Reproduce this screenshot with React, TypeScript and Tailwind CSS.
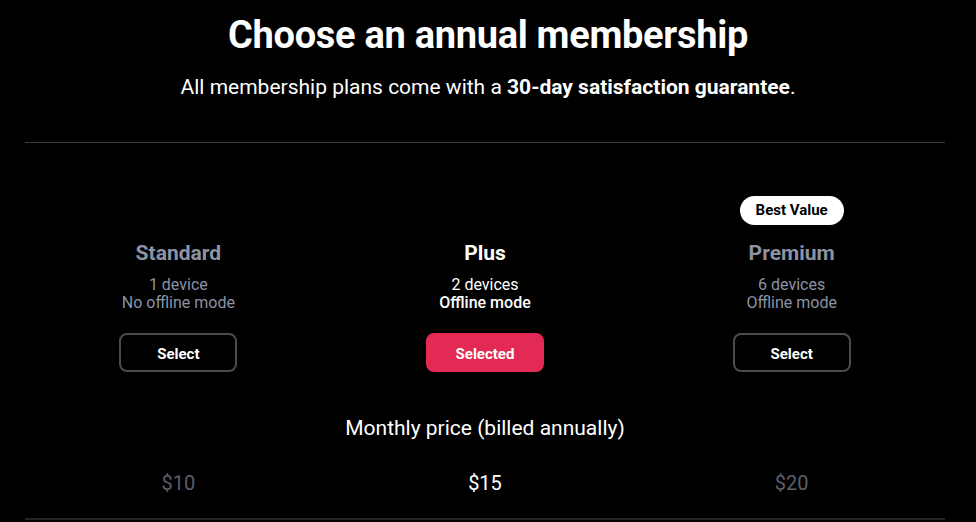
import React from "react";

type Plan = {
  name: string;
  devices: string;
  offline: string;
  price: string;
  selected: boolean;
  badge?: string;
};

const plans: Plan[] = [
  { name: "Standard", devices: "1 device", offline: "No offline mode", price: "$10", selected: false },
  { name: "Plus", devices: "2 devices", offline: "Offline mode", price: "$15", selected: true },
  { name: "Premium", devices: "6 devices", offline: "Offline mode", price: "$20", selected: false, badge: "Best Value" },
];

export default function App() {
  return (
    <div
      className="min-h-[522px] w-full bg-black text-white"
      style={{ fontFamily: "Roboto, 'Liberation Sans', sans-serif" }}
    >
      <div className="flex flex-col items-center pt-[14px]">
        <h1 className="text-[38px] font-bold leading-[42px] tracking-[-0.3px]">
          Choose an annual membership
        </h1>
        <p className="mt-[18px] text-[21px] leading-[26px]">
          All membership plans come with a <span className="font-bold">30-day satisfaction guarantee</span>.
        </p>
      </div>

      <div className="ml-[25px] mt-[42px] w-[920px] border-t border-[#3a3a40]">
        <div className="grid grid-cols-3 pt-[52px]">
          {plans.map((p) => (
            <div key={p.name} className="flex flex-col items-center">
              <div className="flex h-[30px] items-center">
                {p.badge && (
                  <span className="rounded-full bg-white px-[16px] py-[5px] text-[15px] font-bold leading-[19px] text-black">
                    {p.badge}
                  </span>
                )}
              </div>
              <div
                className={
                  p.selected
                    ? "mt-[14px] text-[21px] font-bold leading-[28px] text-white"
                    : "mt-[14px] text-[21px] font-bold leading-[28px] text-[#8b93a5]"
                }
              >
                {p.name}
              </div>
              <div
                className={
                  p.selected
                    ? "mt-[9px] text-center text-[16px] leading-[18px] text-white"
                    : "mt-[9px] text-center text-[16px] leading-[18px] text-[#8b93a5]"
                }
              >
                <div>{p.devices}</div>
                <div className={p.selected ? "font-medium" : ""}>{p.offline}</div>
              </div>
              <button
                className={
                  p.selected
                    ? "mt-[21px] h-[39px] w-[118px] rounded-[8px] border-2 border-[#e32a55] bg-[#e32a55] pt-[3px] text-[15px] font-bold text-white"
                    : "mt-[21px] h-[39px] w-[118px] rounded-[8px] border-2 border-[#4a4b52] bg-black pt-[3px] text-[15px] font-bold text-white"
                }
              >
                {p.selected ? "Selected" : "Select"}
              </button>
            </div>
          ))}
        </div>

        <div className="mt-[42px] text-center text-[21px] leading-[28px]">
          Monthly price (billed annually)
        </div>

        <div className="grid grid-cols-3 pt-[27px] pb-[21px]">
          {plans.map((p) => (
            <div
              key={p.price}
              className={
                p.selected
                  ? "text-center text-[20px] leading-[28px] text-white"
                  : "text-center text-[20px] leading-[28px] text-[#5b5f69]"
              }
            >
              {p.price}
            </div>
          ))}
        </div>
        <div className="h-[2px] bg-[#23242a]" />
      </div>
    </div>
  );
}
